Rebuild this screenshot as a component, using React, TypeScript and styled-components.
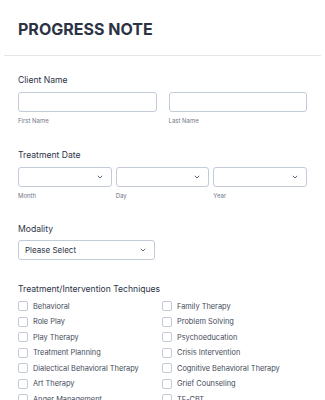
import React from "react";
import styled, { createGlobalStyle } from "styled-components";

const GlobalStyle = createGlobalStyle`
  html, body {
    margin: 0;
    padding: 0;
    background: #ffffff;
  }
  body {
    font-family: Inter, "Noto Sans", sans-serif;
    color: #2c3345;
  }
`;

const Page = styled.div`
  width: 325px;
  height: 400px;
  overflow: hidden;
  background: #ffffff;
`;

const Header = styled.div`
  padding: 19px 18px 0;
`;

const Title = styled.h1`
  margin: 0;
  font-size: 16px;
  line-height: 20px;
  font-weight: 700;
  color: #2c3345;
`;

const Divider = styled.hr`
  margin: 16px 4px 0;
  border: 0;
  border-top: 1px solid #e3e5ea;
`;

const Form = styled.div`
  padding: 18px 18px 0;
  display: flex;
  flex-direction: column;
`;

const Field = styled.div<{ $gap?: number }>`
  margin-bottom: ${(p) => p.$gap ?? 23}px;
`;

const Label = styled.div<{ $space?: number }>`
  font-size: 8.6px;
  line-height: 12px;
  font-weight: 400;
  color: #2c3345;
  margin-bottom: ${(p) => p.$space ?? 6}px;
`;

const Row = styled.div<{ $gap: number }>`
  display: flex;
  gap: ${(p) => p.$gap}px;
`;

const Col = styled.div`
  flex: 1;
  min-width: 0;
`;

const Input = styled.div`
  height: 20px;
  box-sizing: border-box;
  border: 1px solid #c3cad8;
  border-radius: 3px;
  background: #fff;
`;

const SelectBox = styled.div<{ $width?: number }>`
  height: 20px;
  box-sizing: border-box;
  border: 1px solid #c3cad8;
  border-radius: 3px;
  background: #fff;
  display: flex;
  align-items: center;
  justify-content: space-between;
  padding: 0 8px 0 6px;
  width: ${(p) => (p.$width ? `${p.$width}px` : "auto")};
  font-size: 8px;
  color: #2c3345;
`;

const SubLabel = styled.div`
  font-size: 6px;
  line-height: 8px;
  color: #6f7787;
  margin-top: 5px;
`;

const CheckGrid = styled.div`
  display: grid;
  grid-template-columns: 144px 144px;
  margin-top: -2.5px;
`;

const CheckItem = styled.div`
  display: flex;
  align-items: center;
  height: 15.5px;
  gap: 5px;
`;

const Box = styled.span`
  width: 10px;
  height: 10px;
  box-sizing: border-box;
  border: 1px solid #c3cad8;
  border-radius: 2px;
  flex-shrink: 0;
`;

const CheckText = styled.span`
  font-size: 7.4px;
  color: #444b5a;
  white-space: nowrap;
`;

const Chevron = () => (
  <svg width="6" height="4" viewBox="0 0 6 4" fill="none">
    <path d="M0.8 0.8 L3 3 L5.2 0.8" stroke="#57647e" strokeWidth="1" />
  </svg>
);

const techniques = [
  "Behavioral",
  "Family Therapy",
  "Role Play",
  "Problem Solving",
  "Play Therapy",
  "Psychoeducation",
  "Treatment Planning",
  "Crisis Intervention",
  "Dialectical Behavioral Therapy",
  "Cognitive Behavioral Therapy",
  "Art Therapy",
  "Grief Counseling",
  "Anger Management",
  "TF-CBT",
];

const App: React.FC = () => {
  return (
    <Page>
      <GlobalStyle />
      <Header>
        <Title>PROGRESS NOTE</Title>
      </Header>
      <Divider />
      <Form>
        <Field $gap={24}>
          <Label>Client Name</Label>
          <Row $gap={12}>
            <Col>
              <Input />
              <SubLabel>First Name</SubLabel>
            </Col>
            <Col>
              <Input />
              <SubLabel>Last Name</SubLabel>
            </Col>
          </Row>
        </Field>

        <Field $gap={23}>
          <Label>Treatment Date</Label>
          <Row $gap={4}>
            {["Month", "Day", "Year"].map((s) => (
              <Col key={s}>
                <SelectBox>
                  <span />
                  <Chevron />
                </SelectBox>
                <SubLabel>{s}</SubLabel>
              </Col>
            ))}
          </Row>
        </Field>

        <Field $gap={23}>
          <Label $space={5}>Modality</Label>
          <SelectBox $width={137}>
            <span>Please Select</span>
            <Chevron />
          </SelectBox>
        </Field>

        <Field $gap={0}>
          <Label>Treatment/Intervention Techniques</Label>
          <CheckGrid>
            {techniques.map((t) => (
              <CheckItem key={t}>
                <Box />
                <CheckText>{t}</CheckText>
              </CheckItem>
            ))}
          </CheckGrid>
        </Field>
      </Form>
    </Page>
  );
};

export default App;
